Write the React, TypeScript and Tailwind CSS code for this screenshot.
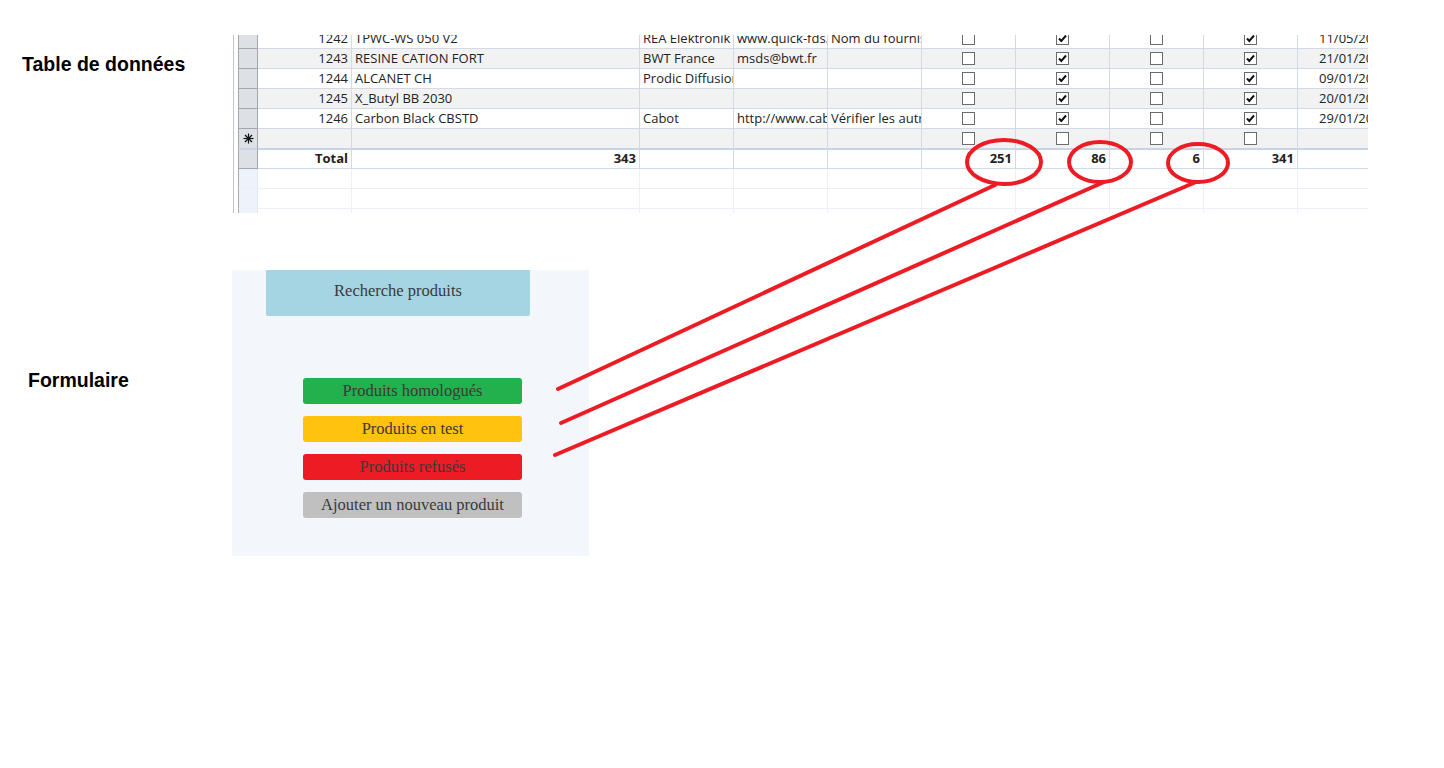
import React from "react"

type Row = {
  id: number
  name: string
  supplier: string
  url: string
  note: string
  checks: boolean[]
  date: string
}

const rows: Row[] = [
  { id: 1242, name: "TPWC-WS 050 V2", supplier: "REA Elektronik", url: "www.quick-fds.com", note: "Nom du fournisseur", checks: [false, true, false, true], date: "11/05/2018" },
  { id: 1243, name: "RESINE CATION FORT", supplier: "BWT France", url: "msds@bwt.fr", note: "", checks: [false, true, false, true], date: "21/01/2019" },
  { id: 1244, name: "ALCANET CH", supplier: "Prodic Diffusion", url: "", note: "", checks: [false, true, false, true], date: "09/01/2019" },
  { id: 1245, name: "X_Butyl BB 2030", supplier: "", url: "", note: "", checks: [false, true, false, true], date: "20/01/2019" },
  { id: 1246, name: "Carbon Black CBSTD", supplier: "Cabot", url: "http://www.cabotcorp.com", note: "Vérifier les autres fiches", checks: [false, true, false, true], date: "29/01/2019" },
]

const buttons = [
  { label: "Produits homologués", color: "bg-[#22b14c]" },
  { label: "Produits en test", color: "bg-[#ffc20e]" },
  { label: "Produits refusés", color: "bg-[#ed1c24]" },
  { label: "Ajouter un nouveau produit", color: "bg-[#c0c0c0]" },
]

function Checkbox({ checked }: { checked: boolean }) {
  return (
    <div className="w-[13px] h-[13px] border border-[#6b6b6b] bg-white flex items-center justify-center">
      {checked && (
        <svg width="11" height="11" viewBox="0 0 11 11">
          <path d="M2 5.5 L4.3 8 L9 2.5" fill="none" stroke="#111" strokeWidth="2" />
        </svg>
      )}
    </div>
  )
}

function Selector({ children, empty }: { children?: React.ReactNode; empty?: boolean }) {
  if (empty) {
    return <div className="w-[20px] shrink-0 border-l border-l-[#a9a9a9] border-r border-r-[#e3e7ee] border-b border-b-[#eceff5] bg-[#eef2fa]" />
  }
  return (
    <div className="w-[20px] shrink-0 border-l border-r border-b border-[#a3a6aa] bg-[#dde1e6] flex items-center justify-center">
      {children}
    </div>
  )
}

function Cell({
  w = "w-[94px]",
  right,
  bold,
  empty,
  center,
  children,
}: {
  w?: string
  right?: boolean
  bold?: boolean
  empty?: boolean
  center?: boolean
  children?: React.ReactNode
}) {
  return (
    <div
      className={`${w} shrink-0 px-[3px] flex items-center overflow-hidden whitespace-nowrap border-r border-b ${
        empty ? "border-[#eceff5]" : "border-[#d3dae6]"
      } ${right ? "justify-end" : center ? "justify-center" : "justify-start"} ${bold ? "font-bold" : ""}`}
    >
      {children}
    </div>
  )
}

function Asterisk() {
  return (
    <svg width="11" height="11" viewBox="0 0 11 11">
      <g stroke="#111" strokeWidth="1.2">
        <line x1="5.5" y1="0.5" x2="5.5" y2="10.5" />
        <line x1="0.5" y1="5.5" x2="10.5" y2="5.5" />
        <line x1="2" y1="2" x2="9" y2="9" />
        <line x1="9" y1="2" x2="2" y2="9" />
      </g>
    </svg>
  )
}

function Datasheet() {
  return (
    <div className="w-[1136px] h-[178px] overflow-hidden flex items-start bg-white text-[13px] text-[#222]" style={{ fontFamily: '"Open Sans", "Liberation Sans", sans-serif' }}>
      <div className="ml-[1px] w-px h-full bg-[#c4c4c4] shrink-0" />
      <div className="w-[4px] shrink-0" />
      <div className="-mt-[6px] flex flex-col shrink-0">
        {rows.map((r, i) => (
          <div key={r.id} className={`flex shrink-0 h-[20px] ${i % 2 === 1 ? "bg-[#f2f2f2]" : "bg-white"}`}>
            <Selector />
            <Cell right>{r.id}</Cell>
            <Cell w="w-[288px]">{r.name}</Cell>
            <Cell>{r.supplier}</Cell>
            <Cell>{r.url}</Cell>
            <Cell>{r.note}</Cell>
            {r.checks.map((c, j) => (
              <Cell key={j} center>
                <Checkbox checked={c} />
              </Cell>
            ))}
            <Cell right>{r.date}</Cell>
          </div>
        ))}

        {/* new record row */}
        <div className="flex shrink-0 h-[21px] bg-[#f2f2f2] [&>div]:border-b-2 [&>div]:border-b-[#c9d3e3]">
          <Selector>
            <Asterisk />
          </Selector>
          <Cell />
          <Cell w="w-[288px]" />
          <Cell />
          <Cell />
          <Cell />
          {[0, 1, 2, 3].map((j) => (
            <Cell key={j} center>
              <Checkbox checked={false} />
            </Cell>
          ))}
          <Cell />
        </div>

        {/* totals */}
        <div className="flex shrink-0 h-[19px] bg-white">
          <Selector />
          <Cell right bold>Total</Cell>
          <Cell w="w-[288px]" right bold>343</Cell>
          <Cell />
          <Cell />
          <Cell />
          <Cell right bold>251</Cell>
          <Cell right bold>86</Cell>
          <Cell right bold>6</Cell>
          <Cell right bold>341</Cell>
          <Cell />
        </div>

        {[0, 1, 2].map((k) => (
          <div key={k} className="flex shrink-0 h-[20px] bg-white">
            <Selector empty />
            <Cell empty />
            <Cell empty w="w-[288px]" />
            <Cell empty />
            <Cell empty />
            <Cell empty />
            <Cell empty />
            <Cell empty />
            <Cell empty />
            <Cell empty />
            <Cell empty />
          </div>
        ))}
      </div>
    </div>
  )
}

function FormPanel() {
  return (
    <div className="w-[357px] h-[286px] bg-[#f3f6fb] text-[#3a3a3a]" style={{ fontFamily: '"Liberation Serif", "Times New Roman", serif' }}>
      <div className="ml-[34px] w-[264px] h-[46px] bg-[#a5d5e3] rounded-b-[2px] flex items-center justify-center text-[16.5px] pb-[3px]">
        Recherche produits
      </div>
      <div className="ml-[71px] mt-[62px] flex flex-col gap-[12px]">
        {buttons.map((b) => (
          <div key={b.label} className={`w-[219px] h-[26px] rounded-[3px] ${b.color} flex items-center justify-center text-[16.5px]`}>
            {b.label}
          </div>
        ))}
      </div>
    </div>
  )
}

export default function App() {
  return (
    <div className="relative min-h-screen bg-white">
      <div className="pt-[35px]">
        <div className="flex">
          <div className="w-[232px] shrink-0 pl-[22px] pt-[18px]">
            <h2 className="text-[19.5px] leading-[22px] font-bold text-black" style={{ fontFamily: '"Liberation Sans", Arial, sans-serif' }}>
              Table de données
            </h2>
          </div>
          <Datasheet />
        </div>

        <div className="flex mt-[57px]">
          <div className="w-[232px] shrink-0 pl-[28px] pt-[99px]">
            <h2 className="text-[19.5px] leading-[22px] font-bold text-black" style={{ fontFamily: '"Liberation Sans", Arial, sans-serif' }}>
              Formulaire
            </h2>
          </div>
          <FormPanel />
        </div>
      </div>

      {/* hand-drawn annotation */}
      <svg className="absolute inset-0 pointer-events-none" width="1444" height="768" viewBox="0 0 1444 768">
        <g fill="none" stroke="#ed1c24" strokeWidth="4" strokeLinecap="round">
          <ellipse cx="1004" cy="162" rx="37" ry="22" />
          <ellipse cx="1100" cy="162" rx="31" ry="20" />
          <ellipse cx="1198" cy="163" rx="30" ry="19" />
          <line x1="995" y1="185" x2="558" y2="389" />
          <line x1="1104" y1="182" x2="561" y2="423" />
          <line x1="1196" y1="182" x2="555" y2="455" />
        </g>
      </svg>
    </div>
  )
}
